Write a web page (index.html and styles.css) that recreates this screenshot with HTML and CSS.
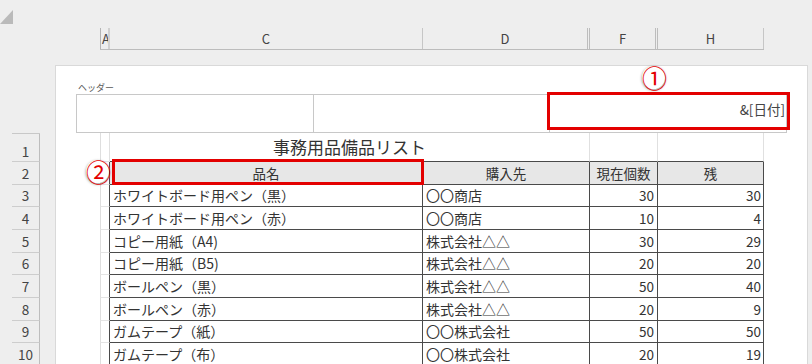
FILE: index.html
```html
<!DOCTYPE html>
<html lang="ja">
<head>
  <meta charset="UTF-8" />
  <meta name="viewport" content="width=device-width, initial-scale=1.0"/>
  <title>事務用品備品リスト - ページレイアウト</title>
  <link rel="stylesheet" href="styles.css">
</head>
<body>
  <div class="topbar">
    <div class="corner"></div>
    <div class="colheads">
      <div class="colhead col-a">A</div>
      <div class="colhead col-c">C</div>
      <div class="colhead col-d">D</div>
      <div class="colhead col-f">F</div>
      <div class="colhead col-h">H</div>
    </div>
  </div>

  <div class="main">
    <div class="rowheads">
      <div class="rowhead first">1</div>
      <div class="rowhead">2</div>
      <div class="rowhead">3</div>
      <div class="rowhead">4</div>
      <div class="rowhead">5</div>
      <div class="rowhead">6</div>
      <div class="rowhead">7</div>
      <div class="rowhead">8</div>
      <div class="rowhead">9</div>
      <div class="rowhead">10</div>
    </div>

    <div class="page">
      <div class="hdr-label">ヘッダー</div>
      <div class="hdr-box">
        <div class="hdr-cell"></div>
        <div class="hdr-cell"></div>
        <div class="hdr-cell date">&amp;[日付]</div>
      </div>

      <div class="grid">
        <div class="row title-row">
          <div class="cell a"></div>
          <div class="cell cd">事務用品備品リスト</div>
          <div class="cell f"></div>
          <div class="cell h"></div>
        </div>
        <div class="row head-row">
          <div class="cell a"></div>
          <div class="cell c">品名</div>
          <div class="cell d">購入先</div>
          <div class="cell f">現在個数</div>
          <div class="cell h">残</div>
        </div>
        <div class="row">
          <div class="cell a"></div>
          <div class="cell c">ホワイトボード用ペン（黒）</div>
          <div class="cell d">〇〇商店</div>
          <div class="cell f num">30</div>
          <div class="cell h num">30</div>
        </div>
        <div class="row">
          <div class="cell a"></div>
          <div class="cell c">ホワイトボード用ペン（赤）</div>
          <div class="cell d">〇〇商店</div>
          <div class="cell f num">10</div>
          <div class="cell h num">4</div>
        </div>
        <div class="row">
          <div class="cell a"></div>
          <div class="cell c">コピー用紙（A4)</div>
          <div class="cell d">株式会社△△</div>
          <div class="cell f num">30</div>
          <div class="cell h num">29</div>
        </div>
        <div class="row">
          <div class="cell a"></div>
          <div class="cell c">コピー用紙（B5)</div>
          <div class="cell d">株式会社△△</div>
          <div class="cell f num">20</div>
          <div class="cell h num">20</div>
        </div>
        <div class="row">
          <div class="cell a"></div>
          <div class="cell c">ボールペン（黒）</div>
          <div class="cell d">株式会社△△</div>
          <div class="cell f num">50</div>
          <div class="cell h num">40</div>
        </div>
        <div class="row">
          <div class="cell a"></div>
          <div class="cell c">ボールペン（赤）</div>
          <div class="cell d">株式会社△△</div>
          <div class="cell f num">20</div>
          <div class="cell h num">9</div>
        </div>
        <div class="row">
          <div class="cell a"></div>
          <div class="cell c">ガムテープ（紙）</div>
          <div class="cell d">〇〇株式会社</div>
          <div class="cell f num">50</div>
          <div class="cell h num">50</div>
        </div>
        <div class="row">
          <div class="cell a"></div>
          <div class="cell c">ガムテープ（布）</div>
          <div class="cell d">〇〇株式会社</div>
          <div class="cell f num">20</div>
          <div class="cell h num">19</div>
        </div>
      </div>

      <!-- callouts -->
      <div class="mark mark-1"></div>
      <div class="mark mark-2"></div>
      <div class="badge badge-1">①</div>
      <div class="badge badge-2">②</div>
    </div>
  </div>
</body>
</html>
```

FILE: styles.css
```css
body {
  margin: 0;
  width: 812px;
  height: 364px;
  overflow: hidden;
  background: #eeeeee;
  font-family: "Noto Sans CJK JP", "Noto Sans", sans-serif;
  color: #333;
}

/* column letters */
.topbar {
  display: flex;
  align-items: flex-start;
  height: 50px;
}
.corner {
  margin-top: 10px;
  width: 0;
  height: 0;
  border-left: 13px solid transparent;
  border-bottom: 14px solid #bababa;
}
.colheads {
  display: flex;
  margin-left: 87px;
  margin-top: 28px;
  height: 22px;
  box-sizing: border-box;
  border-bottom: 1px solid #bcbcbc;
}
.colhead {
  box-sizing: border-box;
  display: flex;
  align-items: center;
  justify-content: center;
  font-size: 13px;
  line-height: 16px;
  color: #444;
  border-right: 1px solid #c6c6c6;
  overflow: hidden;
}
.col-a {
  width: 10px;
  justify-content: flex-start;
  padding-left: 1px;
  border-left: 1px solid #b4b4b4;
  border-right: 2px solid #d0d0d0;
}
.col-c { width: 313px; }
.col-d { width: 167px; border-right: 3px double #bdbdbd; }
.col-f { width: 68px; border-right: 3px double #bdbdbd; }
.col-h { width: 106px; }

.main {
  display: flex;
  align-items: flex-start;
  height: 314px;
  overflow: hidden;
}

/* row numbers */
.rowheads {
  margin-left: 12px;
  margin-top: 83px;
  width: 28px;
  border-top: 1px solid #c8c8c8;
}
.rowhead {
  box-sizing: border-box;
  height: 22.67px;
  display: flex;
  align-items: center;
  justify-content: center;
  font-size: 13.5px;
  color: #444;
  border-bottom: 1px solid #cdcdcd;
  border-right: 1px solid #bdbdbd;
}
.rowhead.first { height: 28px; padding-top: 7px; }

/* printed page */
.page {
  position: relative;
  margin-left: 15px;
  margin-top: 15px;
  width: 753px;
  height: 330px;
  box-sizing: border-box;
  background: #fff;
  border: 1px solid #d9d9d9;
  border-bottom: 0;
}
.hdr-label {
  margin: 16px 0 0 22px;
  height: 11px;
  font-size: 9px;
  line-height: 11px;
  color: #5a5a5a;
}
.hdr-box {
  margin: 1px 0 0 20px;
  width: 711px;
  height: 39px;
  box-sizing: border-box;
  display: grid;
  grid-template-columns: 237px 236px 1fr;
  border: 1px solid #c8c8c8;
}
.hdr-cell { border-right: 1px solid #c8c8c8; }
.hdr-cell:last-child { border-right: 0; }
.hdr-cell.date {
  text-align: right;
  padding: 5px 1px 0 0;
  font-size: 13.5px;
  line-height: 18px;
  color: #444;
}

/* sheet cells */
.grid { margin-left: 44px; }
.row { display: flex; height: 22.67px; }
.cell {
  box-sizing: border-box;
  display: flex;
  align-items: center;
  padding: 0 3px;
  font-size: 14px;
  line-height: 18px;
  white-space: nowrap;
  overflow: hidden;
  color: #333;
  border-right: 1px solid #4a4a4a;
  border-bottom: 1px solid #4a4a4a;
}
.cell.a {
  width: 10px;
  padding: 0;
  border-left: 1px solid #dedede;
  border-bottom-color: #e4e4e4;
}
.cell.c { width: 313px; }
.cell.d { width: 167px; }
.cell.f { width: 68px; }
.cell.h { width: 106px; }
.cell.cd { width: 480px; }
.cell.num { justify-content: flex-end; padding-right: 3px; font-size: 13.5px; }
.cell.h.num { padding-right: 2px; }

.title-row { height: 29px; }
.title-row .cell { border-right-color: #e0e0e0; }
.title-row .cell.a { border-bottom-color: #e0e0e0; }
.title-row .cell.cd {
  justify-content: center;
  font-size: 17px;
  line-height: 22px;
  padding-bottom: 1px;
}
.head-row .cell { background: #e7e7e7; justify-content: center; font-size: 13.5px; }
.head-row .cell.a { background: none; }

/* red callouts */
.mark {
  position: absolute;
  box-sizing: border-box;
  border: 3px solid #e30000;
}
.mark-1 { left: 491px; top: 26px; width: 243px; height: 38px; }
.mark-2 { left: 56px; top: 93px; width: 312px; height: 26px; }

.badge {
  position: absolute;
  width: 23px;
  height: 23px;
  border-radius: 50%;
  background: #fff;
  box-shadow: 0 1px 3px rgba(0, 0, 0, 0.45);
  color: #e30000;
  font-size: 25px;
  line-height: 23px;
  text-align: center;
}
.badge-1 { left: 586px; top: 0; }
.badge-2 { left: 30px; top: 94px; }
```
